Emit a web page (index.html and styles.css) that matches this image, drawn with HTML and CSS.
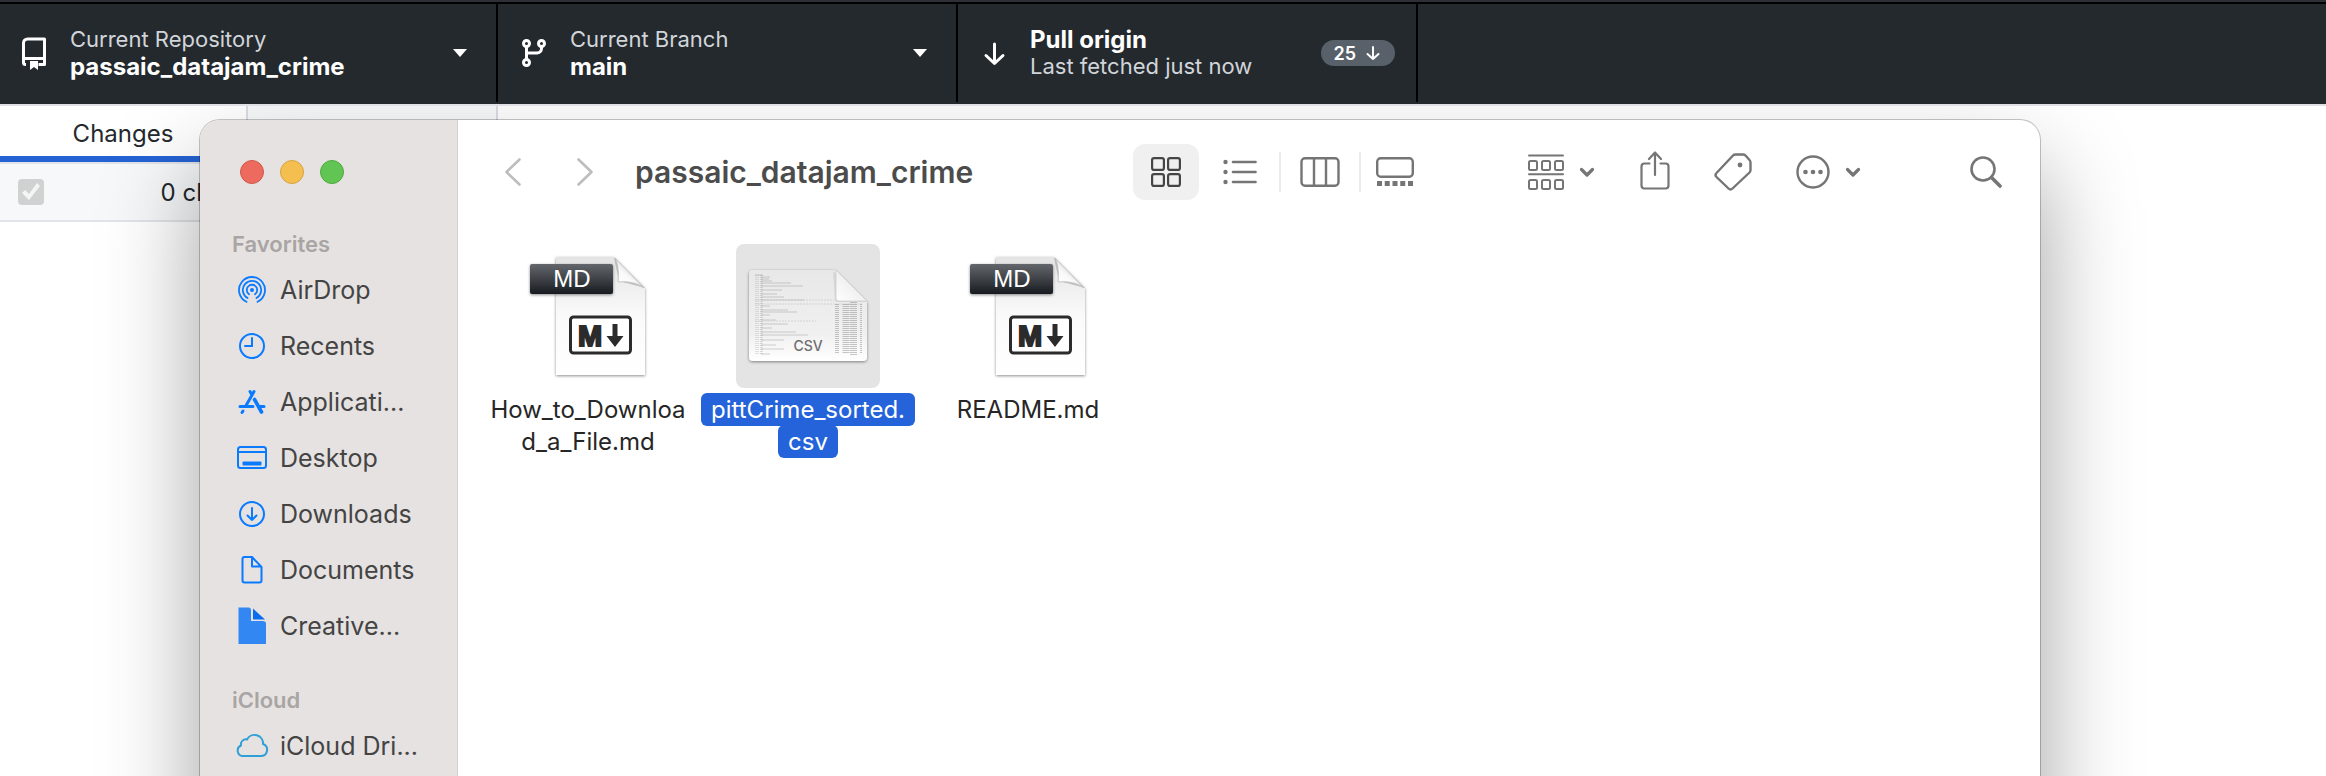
FILE: index.html
```html
<!DOCTYPE html>
<html lang="en">
<head>
<meta charset="utf-8">
<title>passaic_datajam_crime</title>
<link rel="stylesheet" href="styles.css">
</head>
<body>
<svg class="defs" aria-hidden="true">
  <defs>
    <linearGradient id="page" x1="0" y1="0" x2="0" y2="1">
      <stop offset="0" stop-color="#e4e4e4"/><stop offset=".5" stop-color="#fafafa"/><stop offset="1" stop-color="#fff"/>
    </linearGradient>
    <linearGradient id="tag" x1="0" y1="0" x2="0" y2="1">
      <stop offset="0" stop-color="#63666b"/><stop offset=".5" stop-color="#3f4247"/><stop offset="1" stop-color="#171b20"/>
    </linearGradient>
    <linearGradient id="fold" x1="0" y1="1" x2=".6" y2=".3">
      <stop offset="0" stop-color="#fff"/><stop offset=".6" stop-color="#fafafa"/><stop offset="1" stop-color="#d8d8d8"/>
    </linearGradient>
    <linearGradient id="curl" x1="0" y1="1" x2=".5" y2=".5">
      <stop offset="0" stop-color="#fff"/><stop offset="1" stop-color="#f0f0f0"/>
    </linearGradient>
    <linearGradient id="sheet" x1="0" y1="0" x2="0" y2="1">
      <stop offset="0" stop-color="#e8e8e8"/><stop offset=".7" stop-color="#f0f0f0"/><stop offset="1" stop-color="#fff"/>
    </linearGradient>
    <filter id="soft" x="-20%" y="-20%" width="140%" height="150%">
      <feDropShadow dx="0" dy="1" stdDeviation="1.5" flood-opacity=".45"/>
    </filter>
    <symbol id="md-file" viewBox="0 0 144 144">
      <path filter="url(#soft)" fill="url(#page)" d="M40 13h58l31 31v87H40z"/>
      <path fill="#8b8b8b" opacity=".45" d="M98 14l31 30-26-7z"/>
      <path fill="url(#fold)" stroke="#b5b5b5" stroke-width=".7" d="M99 14c3 6 4 15 3 24 10-1 20 1 26 6z"/>
      <rect filter="url(#soft)" x="14" y="20" width="83" height="30" rx="2" fill="url(#tag)"/>
      <text x="56" y="43" text-anchor="middle" class="tag-text">MD</text>
      <rect x="54.500" y="73" width="60" height="36" rx="3" fill="#fff" stroke="#2b2b2b" stroke-width="3"/>
      <text x="74" y="102" text-anchor="middle" class="mark-text">M</text>
      <path fill="#2b2b2b" d="M96.500 80h5v12h6l-8.500 11-8.500-11h6z"/>
    </symbol>
    <symbol id="down" viewBox="0 0 18 16">
      <path d="M3.500 5.500l5.500 5.500 5.500-5.500" fill="none" stroke="#757575" stroke-width="3.200" stroke-linecap="round" stroke-linejoin="round"/>
    </symbol>
  </defs>
</svg>

<div class="desktop">
  <header class="topbar">
    <button class="tool" type="button">
      <svg class="tool-icon" width="28" height="34" viewBox="0 0 28 34" fill="none" stroke="#fff" stroke-width="3"><path d="M6 28.500H5.500A2 2 0 0 1 3.500 26.500V7a4 4 0 0 1 4-4h17v25.500h-6M3.500 22.500h21" stroke-linejoin="round"/><path d="M10 25h8v9l-4-3-4 3z" fill="#fff" stroke="none"/></svg>
      <span class="tool-text"><span class="tool-label">Current Repository</span><strong class="tool-value">passaic_datajam_crime</strong></span>
      <svg class="caret" width="14" height="8" viewBox="0 0 14 8"><path d="M0 0h14L7 8z" fill="#fff"/></svg>
    </button>
    <button class="tool" type="button">
      <svg class="tool-icon" width="28" height="34" viewBox="0 0 28 34" fill="none" stroke="#fff" stroke-width="3"><circle cx="6.500" cy="7.500" r="3"/><circle cx="21.500" cy="7.500" r="3"/><circle cx="6.500" cy="26.500" r="3"/><path d="M6.500 10.500v13M21.500 10.500v2a4.500 4.500 0 0 1-4.500 4.500H6.500"/></svg>
      <span class="tool-text"><span class="tool-label">Current Branch</span><strong class="tool-value">main</strong></span>
      <svg class="caret" width="14" height="8" viewBox="0 0 14 8"><path d="M0 0h14L7 8z" fill="#fff"/></svg>
    </button>
    <button class="tool" type="button">
      <svg class="tool-icon" width="28" height="34" viewBox="0 0 28 34" fill="none" stroke="#fff" stroke-width="3" stroke-linecap="round" stroke-linejoin="round"><path d="M14.500 8v19M6 19.500l8.500 8 8.500-8"/></svg>
      <span class="tool-text"><strong class="tool-value">Pull origin</strong><span class="tool-label">Last fetched just now</span></span>
      <span class="badge">25 <svg width="14" height="16" viewBox="0 0 14 16" fill="none" stroke="#fff" stroke-width="2" stroke-linecap="round" stroke-linejoin="round"><path d="M7 2v12M1.500 9L7 14l5.500-5"/></svg></span>
    </button>
  </header>

  <section class="repo">
    <div class="tabs">
      <button class="tab tab-active" type="button">Changes</button>
      <div class="tab tab-rest"></div>
    </div>
    <label class="changes-row"><input class="check" type="checkbox" checked disabled><span class="changes-count">0 changed files</span></label>
  </section>

  <main class="window">
    <nav class="sidebar">
      <div class="lights">
        <button class="light red" type="button" aria-label="Close"></button>
        <button class="light yellow" type="button" aria-label="Minimize"></button>
        <button class="light green" type="button" aria-label="Zoom"></button>
      </div>
      <h2 class="group">Favorites</h2>
      <a class="place" href="#"><svg width="34" height="38" viewBox="-17 -19 34 38" fill="none" stroke="#0a7aff" stroke-width="1.800" stroke-linecap="round"><circle r="2" fill="#0a7aff" stroke="none"/><path d="M-3 4.200A5.200 5.200 0 1 1 3 4.200M-4.500 8A9.200 9.200 0 1 1 4.500 8M-5.500 11.800A13 13 0 1 1 5.500 11.800" /></svg>AirDrop</a>
      <a class="place" href="#"><svg width="34" height="38" viewBox="-17 -19 34 38" fill="none" stroke="#0a7aff" stroke-width="2"><circle r="12"/><path d="M0-8V0H-7" stroke-linecap="round"/></svg>Recents</a>
      <a class="place" href="#"><svg width="34" height="38" viewBox="-17 -19 34 38" fill="none" stroke="#0a7aff" stroke-width="3" stroke-linecap="round"><path d="M2-10.500L-6.500 4.500M-2-10.500L0-7M-12 4.500H1M7.500 4.500H12M-9 9l-1 1.500" /><path d="M2.500-2.500L9.500 10" stroke-width="3.600"/></svg>Applicati...</a>
      <a class="place" href="#"><svg width="34" height="38" viewBox="-17 -19 34 38" fill="none" stroke="#0a7aff" stroke-width="2"><rect x="-14" y="-11" width="28" height="21" rx="2.500"/><path d="M-14-6H14"/><rect x="-9.500" y="3.500" width="19" height="4" rx="1" fill="#0a7aff" stroke="none"/></svg>Desktop</a>
      <a class="place" href="#"><svg width="34" height="38" viewBox="-17 -19 34 38" fill="none" stroke="#0a7aff" stroke-width="2" stroke-linecap="round" stroke-linejoin="round"><circle r="12"/><path d="M0-6V6M-4.500 1.500L0 6l4.500-4.500"/></svg>Downloads</a>
      <a class="place" href="#"><svg width="34" height="38" viewBox="-17 -19 34 38" fill="none" stroke="#0a7aff" stroke-width="2" stroke-linejoin="round"><path d="M-7.500-13H0L9.500-3V10.500A2 2 0 0 1 7.500 12.500H-7.500A2 2 0 0 1-9.500 10.500V-11A2 2 0 0 1-7.500-13zM0-13V-3.500H9.500"/></svg>Documents</a>
      <a class="place" href="#"><svg width="34" height="38" viewBox="-17 -19 34 38"><path fill="#3287f2" d="M-13.500-18.500H-3Q-1-18.500-1-16V-5H10.500Q14-5 14-2.500V18H-13.500z"/><path fill="#0a6df0" d="M1-17.500L13-6.500H1z"/></svg>Creative...</a>
      <h2 class="group group-next">iCloud</h2>
      <a class="place" href="#"><svg width="34" height="38" viewBox="-17 -19 34 38" fill="none" stroke="#2f9fd8" stroke-width="2"><path d="M-9.500 10A5.500 5.500 0 0 1-11-.5A5 5 0 0 1-5-6.500A8.500 8.500 0 0 1 11-2A6.200 6.200 0 0 1 9.500 10z" stroke-linejoin="round"/></svg>iCloud Dri...</a>
    </nav>

    <section class="pane">
      <div class="toolbar">
        <button class="icon-btn nav" type="button" aria-label="Back"><svg width="16" height="28" viewBox="0 0 16 28" fill="none" stroke="#bdbdbd" stroke-width="2.600" stroke-linecap="round" stroke-linejoin="round"><path d="M14.500 1.500L1.500 14l13 12.500"/></svg></button>
        <button class="icon-btn nav" type="button" aria-label="Forward"><svg width="16" height="28" viewBox="0 0 16 28" fill="none" stroke="#bdbdbd" stroke-width="2.600" stroke-linecap="round" stroke-linejoin="round"><path d="M1.500 1.500L14.500 14l-13 12.500"/></svg></button>
        <h1 class="title">passaic_datajam_crime</h1>
        <div class="views">
          <button class="icon-btn view view-on" type="button" aria-label="Icons"><svg width="30" height="30" viewBox="0 0 30 30" fill="none" stroke="#454545" stroke-width="2.200"><rect x="1.100" y="1.100" width="11.800" height="11.800" rx="2"/><rect x="17.100" y="1.100" width="11.800" height="11.800" rx="2"/><rect x="1.100" y="17.100" width="11.800" height="11.800" rx="2"/><rect x="17.100" y="17.100" width="11.800" height="11.800" rx="2"/></svg></button>
          <button class="icon-btn view" type="button" aria-label="List"><svg width="34" height="30" viewBox="0 0 34 30" stroke="#757575" stroke-width="2.600" stroke-linecap="round"><path d="M10 5h22.500M10 15h22.500M10 25h22.500"/><g fill="#757575" stroke="none"><circle cx="2.500" cy="5" r="2.200"/><circle cx="2.500" cy="15" r="2.200"/><circle cx="2.500" cy="25" r="2.200"/></g></svg></button>
          <span class="rule"></span>
          <button class="icon-btn view" type="button" aria-label="Columns"><svg width="40" height="30" viewBox="0 0 40 30" fill="none" stroke="#757575" stroke-width="2.400"><rect x="1.500" y="1.200" width="37" height="27.600" rx="3.500"/><path d="M14 1v28M26 1v28"/></svg></button>
          <span class="rule"></span>
          <button class="icon-btn view view-last" type="button" aria-label="Gallery"><svg width="38" height="30" viewBox="0 0 38 30" fill="none" stroke="#757575" stroke-width="2.400"><rect x="1.200" y="1.200" width="35.600" height="18.600" rx="3.500"/><path d="M1 26.500h36" stroke-width="5" stroke-dasharray="5 2.750"/></svg></button>
        </div>
        <div class="actions">
          <button class="icon-btn menu" type="button" aria-label="Group"><svg width="36" height="36" viewBox="0 0 36 36" fill="none" stroke="#757575" stroke-width="2"><path d="M1 1.500h34M1 20.300h34" stroke-linecap="round"/><g><rect x="1" y="7" width="8" height="9" rx="1.500"/><rect x="14" y="7" width="8" height="9" rx="1.500"/><rect x="27" y="7" width="8" height="9" rx="1.500"/><rect x="1" y="26" width="8" height="9" rx="1.500"/><rect x="14" y="26" width="8" height="9" rx="1.500"/><rect x="27" y="26" width="8" height="9" rx="1.500"/></g></svg><svg width="18" height="16"><use href="#down"/></svg></button>
          <button class="icon-btn" type="button" aria-label="Share"><svg width="30" height="42" viewBox="0 0 30 42" fill="none" stroke="#757575" stroke-width="2.200" stroke-linecap="round" stroke-linejoin="round"><path d="M9.500 12.500H4.500A3 3 0 0 0 1.500 15.500v19A3 3 0 0 0 4.500 37.500h21A3 3 0 0 0 28.500 34.500v-19A3 3 0 0 0 25.500 12.500H20.500M15 24V2M9 8l6-6.500L21 8"/></svg></button>
          <button class="icon-btn" type="button" aria-label="Tags"><svg width="38" height="38" viewBox="0 0 38 38" fill="none" stroke="#757575" stroke-width="2.400" stroke-linejoin="round"><path d="M19 2.500Q20 1.500 21.500 1.500H29Q30.500 1.500 31.500 2.500L35.500 7Q36.500 8 36.500 9.500V17Q36.500 18.500 35.500 19.500L18.500 35.500Q16.500 37.500 14.500 35.500L2.500 24Q.5 22 2.500 20z"/><circle cx="26" cy="12" r="2.400" fill="#757575" stroke="none"/></svg></button>
          <button class="icon-btn menu" type="button" aria-label="More"><svg width="34" height="34" viewBox="0 0 34 34" fill="none" stroke="#757575" stroke-width="2.400"><circle cx="17" cy="17" r="15.500"/><g fill="#757575" stroke="none"><circle cx="9.500" cy="17" r="2.300"/><circle cx="17" cy="17" r="2.300"/><circle cx="24.500" cy="17" r="2.300"/></g></svg><svg width="18" height="16"><use href="#down"/></svg></button>
        </div>
        <button class="icon-btn search" type="button" aria-label="Search"><svg width="32" height="32" viewBox="0 0 32 32" fill="none" stroke="#757575" stroke-width="2.600" stroke-linecap="round"><circle cx="13" cy="13" r="11.500"/><path d="M21.500 21.500l8.500 8.500" stroke-width="3.600"/></svg></button>
      </div>

      <div class="files">
        <figure class="file">
          <svg class="file-icon" width="144" height="144"><use href="#md-file"/></svg>
          <figcaption class="file-name"><span>How_to_Downloa<br>d_a_File.md</span></figcaption>
        </figure>
        <figure class="file selected">
          <svg class="file-icon" width="144" height="144" viewBox="0 0 144 144">
            <path filter="url(#soft)" fill="url(#sheet)" d="M17 26H99L131 58V113a4 4 0 0 1-4 4H17a4 4 0 0 1-4-4V30a4 4 0 0 1 4-4z"/>
            <g stroke="#8d8d8d" stroke-width="1" opacity=".4" fill="none">
              <path d="M19 31H27M25 33H34M25 35H33M25 37H36M25 39H55M25 42H67M25 46H46M25 50H41M25 53H48M25 56H68M25 62H34M25 66H52M25 68H61M25 71H34M25 76H40M25 80H52M25 84H36M25 88H60M25 91H72M25 96H48M25 101H40M25 105H48M25 110H34"/>
              <path d="M19 56H98M19 60H126M19 77H80" stroke-dasharray="2 1" opacity=".7"/>
            </g>
            <path d="M21 31v80" stroke="#aaa" stroke-width="4" stroke-dasharray="1 1" opacity=".3"/>
            <path d="M25.500 31v80" stroke="#999" stroke-width="3" stroke-dasharray="1 1" opacity=".35"/>
            <g stroke="#777" stroke-dasharray="1 1" opacity=".4"><path d="M101 60v50" stroke-width="4"/><path d="M110 60v50" stroke-width="7"/><path d="M117.500 58v53" stroke-width="7"/><path d="M125 60v50" stroke-width="2"/></g>
            <path d="M97 27l2 31h31z" fill="#888" opacity=".18"/>
            <path fill="url(#curl)" stroke="#c4c4c4" stroke-width=".6" d="M100 26l31 31H103a3 3 0 0 1-3-3z"/>
            <text x="72" y="107" text-anchor="middle" class="csv-text">CSV</text>
          </svg>
          <figcaption class="file-name"><span>pittCrime_sorted.<br>csv</span></figcaption>
        </figure>
        <figure class="file">
          <svg class="file-icon" width="144" height="144"><use href="#md-file"/></svg>
          <figcaption class="file-name"><span>README.md</span></figcaption>
        </figure>
      </div>
    </section>
  </main>
</div>
</body>
</html>
```
FILE: styles.css
```css
* { box-sizing: border-box; }

body {
  margin: 0;
  background: #fff;
  color: #24292e;
  font-family: Inter, "Liberation Sans", sans-serif;
  font-size: 24px;
}

button {
  margin: 0;
  padding: 0;
  border: 0;
  background: none;
  color: inherit;
  font: inherit;
}

svg { display: block; flex: none; }
.defs { position: absolute; width: 0; height: 0; }

.desktop {
  position: relative;
  min-height: 100vh;
  overflow: hidden;
}

/* Application toolbar */
.topbar {
  position: relative;
  z-index: 1;
  display: flex;
  height: 106px;
  padding-top: 2px;
  border-top: 2px solid #2d2f36;
  border-bottom: 2px solid #e1dfe6;
  background: linear-gradient(#000 2px, #24292e 2px);
}

.tool {
  display: flex;
  align-items: center;
  gap: 22px;
  width: 460px;
  height: 98px;
  padding: 0 29px 0 22px;
  border-right: 2px solid #000;
  text-align: left;
}
.tool:first-child { width: 498px; padding-left: 20px; }
.tool-text { flex: 1; display: grid; }
.tool-label, .tool-value { line-height: 27px; }
.tool-label { color: #d1d5da; font-size: 22px; }
.tool-value { color: #fff; font-size: 24px; font-weight: 700; }

.badge {
  display: flex;
  align-items: center;
  gap: 10px;
  height: 26px;
  padding: 0 15px 0 12px;
  margin-right: -8px;
  border-radius: 13px;
  background: #586069;
  color: #fff;
  font-size: 18px;
  font-weight: 600;
}

/* Repository column */
.tabs { display: flex; height: 58px; }
.tab { width: 248px; border-right: 2px solid #dcdce4; }
.tab-active { padding: 5px 0 0; border-bottom: 6px solid #2563d4; margin-bottom: 2px; }
.tab-rest { width: 250px; background: #f8f9fb; }

.changes-row {
  display: flex;
  align-items: center;
  width: 498px;
  height: 60px;
  padding: 0 18px;
  border-top: 2px solid #e1e4e8;
  border-bottom: 2px solid #e1e4e8;
  margin-top: -2px;
  background: #f6f8fa;
}
.changes-count { flex: 1; padding-right: 28px; text-align: center; }

.check {
  appearance: none;
  width: 26px;
  height: 26px;
  margin: 0;
  border-radius: 4px;
  background: #d0d2d1;
}
.check::after {
  content: "";
  display: block;
  width: 26px;
  height: 26px;
  background: #f4f5f5;
  clip-path: polygon(4px 14px, 7px 11px, 11px 15px, 19px 4px, 22px 7px, 11px 21px);
}

/* File manager window */
.window {
  position: absolute;
  top: 120px;
  right: 286px;
  bottom: -200px;
  left: 200px;
  display: flex;
  border-radius: 20px;
  background: #fff;
  box-shadow: 0 0 0 1px rgba(0, 0, 0, .22), 0 48px 96px rgba(0, 0, 0, .38);
}

.sidebar {
  width: 258px;
  padding: 40px 0 0 32px;
  border-right: 1px solid #d3d0cf;
  border-radius: 20px 0 0 20px;
  background: #e6e2e1;
}
.lights { display: flex; gap: 16px; padding-left: 8px; margin-bottom: 44px; }
.light { width: 24px; height: 24px; border-radius: 50%; }
.red { background: #ec6a5e; border: 1px solid #d3564b; }
.yellow { background: #f4bf4f; border: 1px solid #d8a243; }
.green { background: #61c554; border: 1px solid #51a73e; }

.group {
  margin: 0 0 2px;
  color: #a9a5a4;
  font-size: 22px;
  font-weight: 600;
  line-height: 32px;
}
.group-next { margin-top: 30px; }

.place {
  display: flex;
  align-items: center;
  gap: 11px;
  height: 56px;
  padding-left: 3px;
  color: #444;
  font-size: 25px;
  text-decoration: none;
  white-space: nowrap;
}

.pane { flex: 1; min-width: 0; }

.toolbar {
  display: flex;
  align-items: center;
  height: 103px;
  padding: 0 38px 0 47px;
}
.icon-btn { display: flex; align-items: center; justify-content: center; }
.nav { margin-right: 56px; }
.nav + .nav { margin-right: 42px; }
.title { margin: 0; color: #4c4c4c; font-size: 30px; font-weight: 600; line-height: 40px; }

.views { display: flex; align-items: center; margin-left: auto; }
.view { width: 66px; height: 56px; border-radius: 12px; }
.view + .view { margin-left: 8px; }
.view-on { background: #f0f0f0; }
.view-last { width: 56px; }
.rule { width: 2px; height: 40px; margin: 0 6px; background: #ececec; }

.actions { display: flex; align-items: center; gap: 44px; margin-left: 105px; }
.menu { gap: 14px; }
.search { margin-left: 108px; }

.files { display: flex; flex-wrap: wrap; padding: 21px 20px; }
.file { width: 220px; margin: 0; display: flex; flex-direction: column; align-items: center; gap: 6px; }
.file-icon { border-radius: 8px; }
.file-name { color: #262626; line-height: 32px; text-align: center; white-space: nowrap; }
.selected .file-icon { background: #e4e4e4; }
.selected .file-name span {
  padding: 2px 10px;
  border-radius: 6px;
  background: #2563da;
  color: #fff;
  box-decoration-break: clone;
  -webkit-box-decoration-break: clone;
}

.tag-text { fill: #fff; font-family: "Liberation Sans", sans-serif; font-size: 24px; }
.mark-text {
  fill: #2b2b2b;
  stroke: #2b2b2b;
  stroke-width: 2px;
  font-family: "Liberation Sans", sans-serif;
  font-size: 29px;
  font-weight: 700;
}
.csv-text { fill: #6e6e6e; font-size: 14px; font-weight: 500; }
```
